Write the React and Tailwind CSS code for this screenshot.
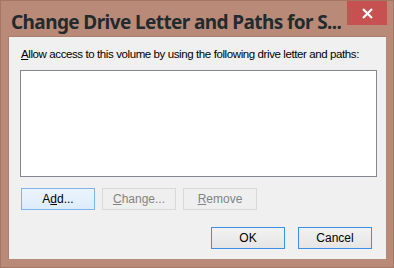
import React from 'react';

const Btn = ({ children, kind = 'normal', className = '' }) => {
  const styles = {
    normal: 'border-[#3c8ee8] bg-gradient-to-b from-[#f2f2f2] to-[#e5e5e5] text-black',
    hot: 'border-[#7eb4ea] bg-gradient-to-b from-[#ecf4fc] to-[#dcecfc] text-black',
    disabled: 'border-[#d9d9d9] bg-[#efefef] text-[#838383]',
  };
  return (
    <div
      className={`w-[74px] h-[22px] border flex items-center justify-center text-[12px] leading-none ${styles[kind]} ${className}`}
    >
      {children}
    </div>
  );
};

export default function App() {
  return (
    <div
      className="w-[394px] h-[268px] bg-[#b98a78] border border-[#a47765] flex flex-col"
      style={{ fontFamily: '"Liberation Sans", Arial, sans-serif' }}
    >
      {/* title bar */}
      <div className="h-[35px] flex items-start relative">
        <div
          className="pl-[10px] pt-[7px] text-[19px] font-bold text-[#222a2e] tracking-[-0.6px] whitespace-nowrap"
          style={{ fontFamily: '"Noto Sans", "Open Sans", sans-serif' }}
        >
          Change Drive Letter and Paths for S...
        </div>
        <div className="absolute left-[346px] top-0 w-[40px] h-[24px] bg-[#c75050] flex items-center justify-center">
          <svg width="11" height="11" viewBox="0 0 11 11">
            <path d="M1 1 L10 10 M10 1 L1 10" stroke="#fff" strokeWidth="2.2" />
          </svg>
        </div>
      </div>

      {/* client area */}
      <div className="ml-[7px] w-[378px] h-[223px] bg-[#f0f0f0] border-t border-l border-[#a98070] flex flex-col">
        <div className="pl-[12px] pt-[10px] text-[11.5px] tracking-[-0.4px] leading-[15px] text-black whitespace-nowrap">
          <span className="underline">A</span>llow access to this volume by using the following drive letter and paths:
        </div>
        <div className="ml-[11px] mt-[8px] w-[357px] h-[107px] bg-white border border-[#828790]" />
        <div className="flex gap-[7px] ml-[12px] mt-[11px]">
          <Btn kind="hot">
            A<span className="underline">d</span>d...
          </Btn>
          <Btn kind="disabled">
            <span className="underline">C</span>hange...
          </Btn>
          <Btn kind="disabled">
            <span className="underline">R</span>emove
          </Btn>
        </div>
        <div className="flex gap-[13px] ml-[202px] mt-[17px]">
          <Btn>OK</Btn>
          <Btn>Cancel</Btn>
        </div>
      </div>
    </div>
  );
}
